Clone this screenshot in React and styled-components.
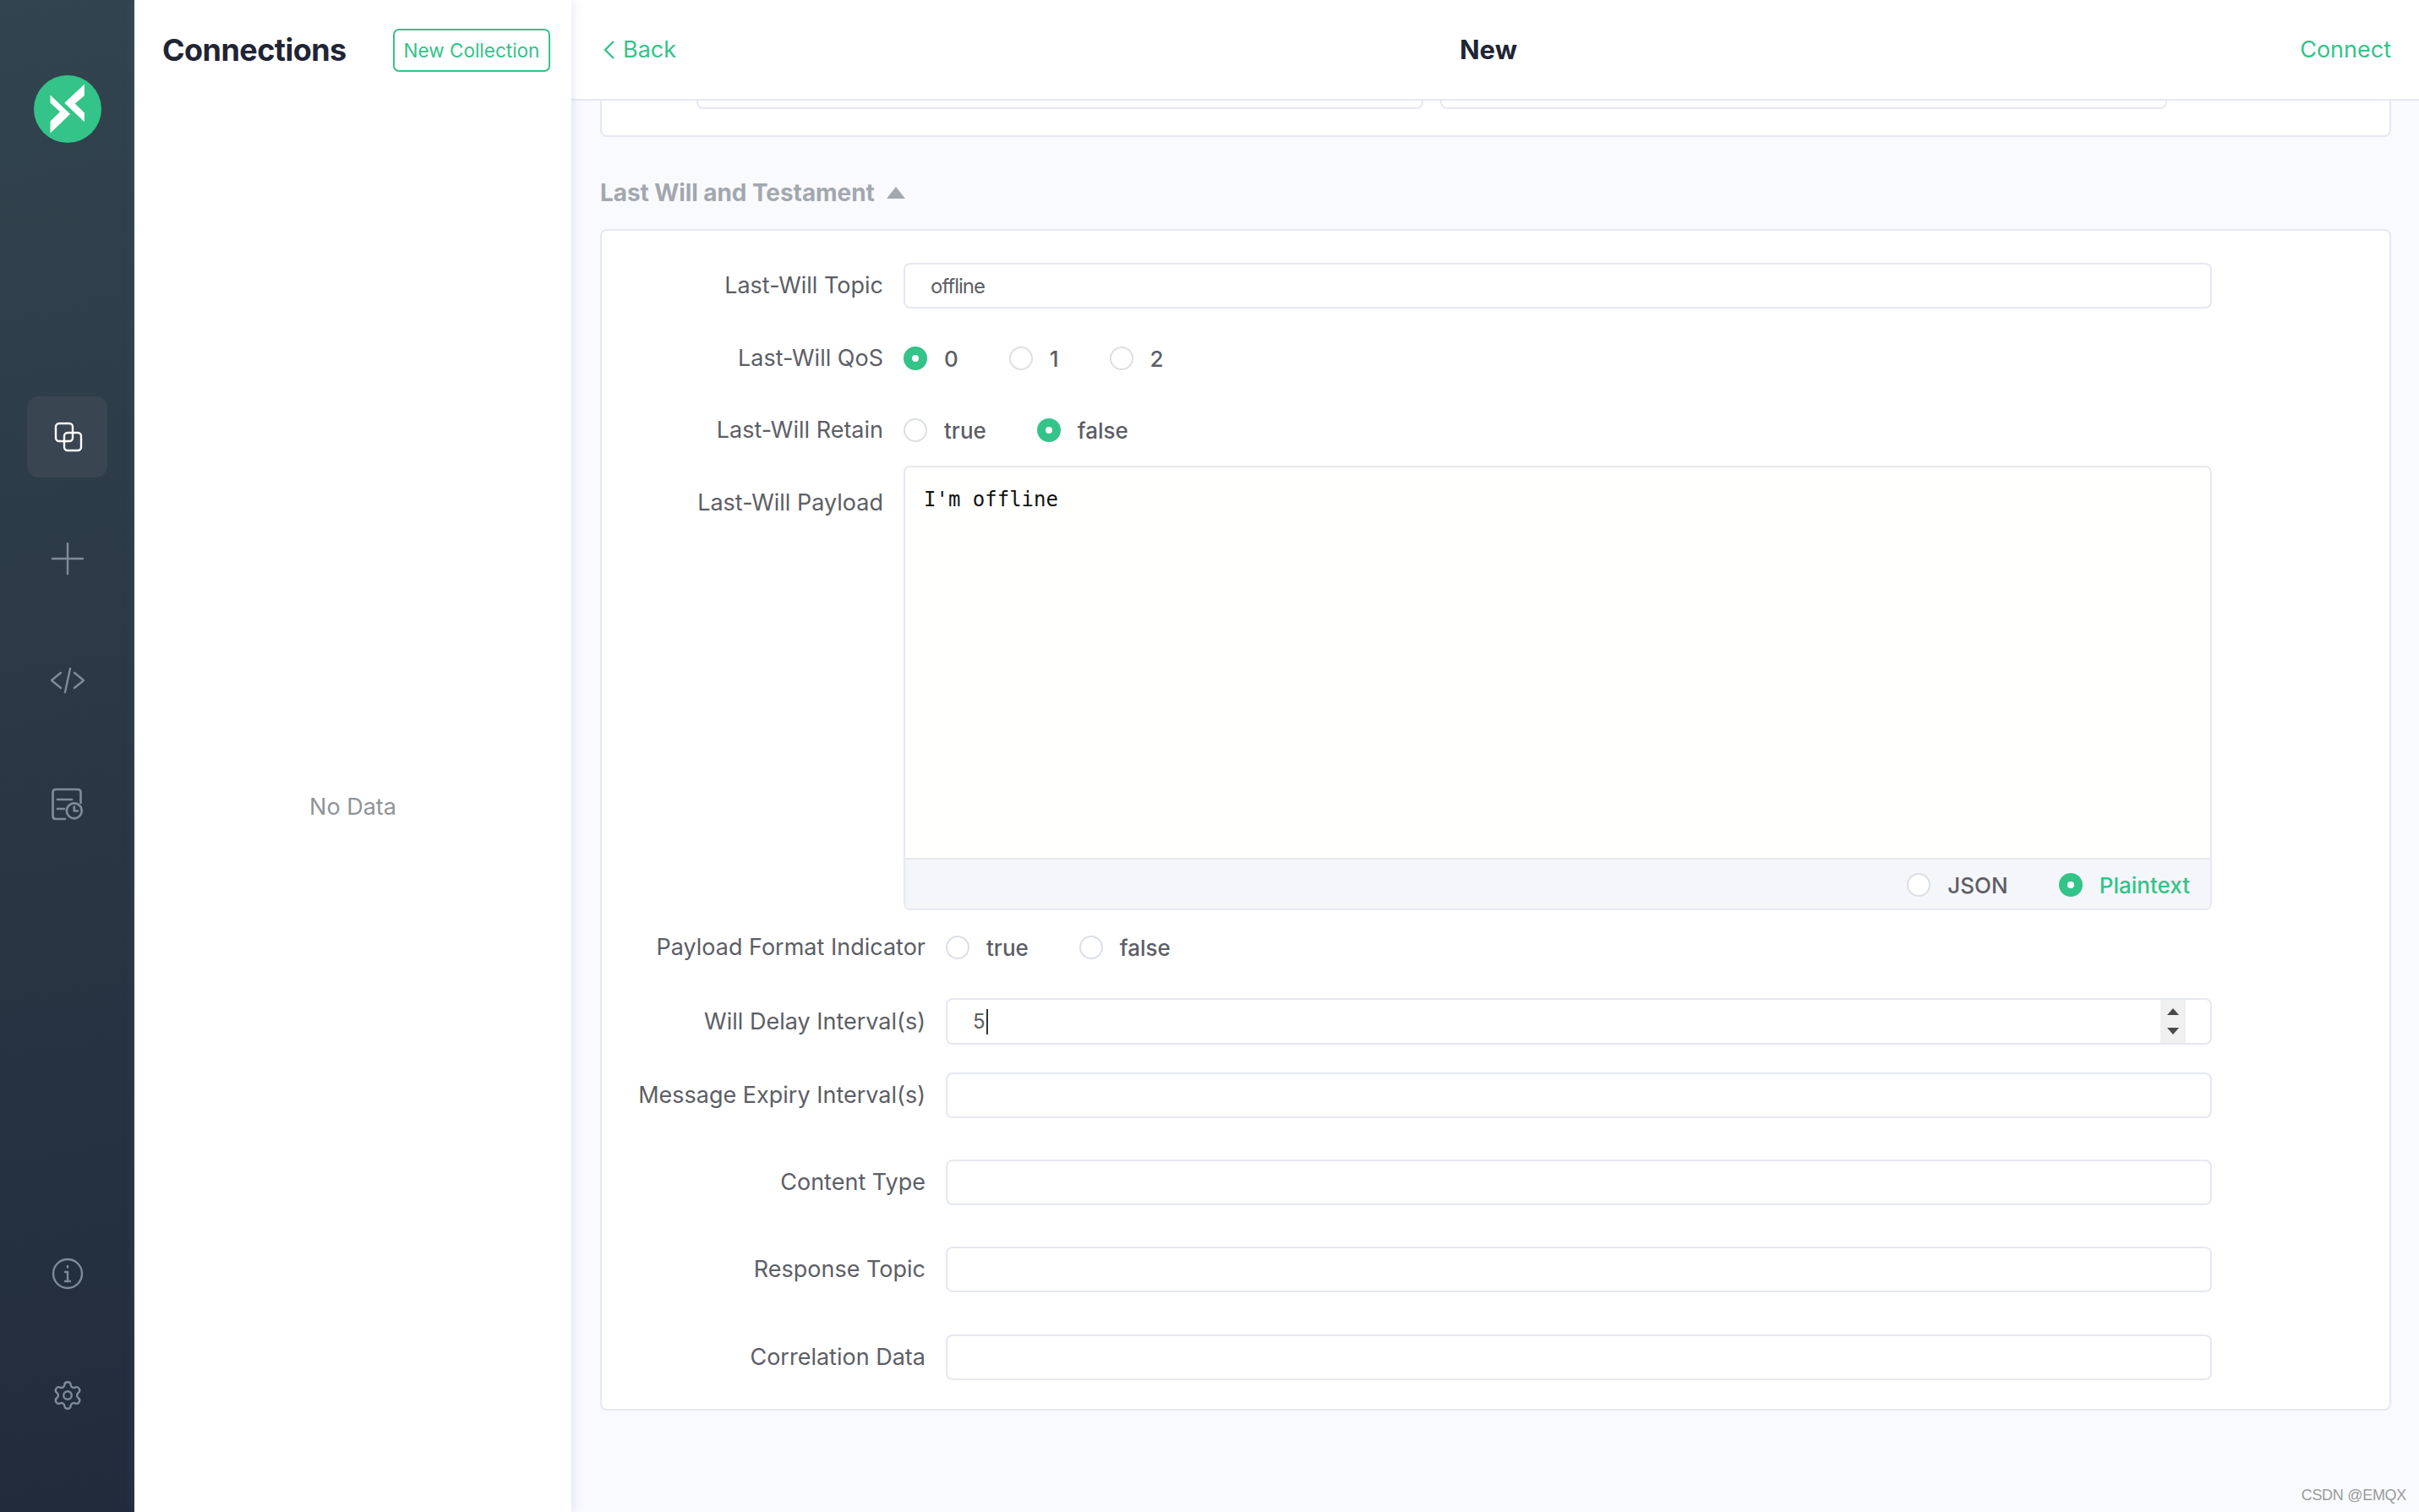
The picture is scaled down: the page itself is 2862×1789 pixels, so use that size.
import React from 'react';
import styled, { createGlobalStyle } from 'styled-components';
import { Settings } from 'lucide-react';

const green = '#34c388';
const line = '#e6e8f1';
const labelColor = '#5c5e66';

const Global = createGlobalStyle`
	html,
	body {
		margin: 0;
		height: 100%;
		overflow: hidden;
		font-family: Inter, "Noto Sans", sans-serif;
	}
	* {
		box-sizing: border-box;
	}
`;
const Page = styled.div`
	display: flex;
	height: 1789px;
	width: 2862px;
	background: #f9fafe;
	position: relative;
	overflow: hidden;
`;
const Sidebar = styled.nav`
	width: 159px;
	flex: none;
	display: flex;
	flex-direction: column;
	align-items: center;
	padding: 89px 0 89px;
	background: linear-gradient(170deg, #32444f 0%, #2b3a46 40%, #222b3c 100%);
`;
const Logo = styled.svg`
	width: 80px;
	height: 80px;
	flex: none;
	margin-bottom: 300px;
`;
const NavItem = styled.div`
	width: 95px;
	height: 96px;
	flex: none;
	display: flex;
	align-items: center;
	justify-content: center;
	border-radius: 14px;
	margin-bottom: ${p => p.$mb || 48}px;
	margin-top: ${p => p.$push ? 'auto' : '0'};
	background: ${p => p.$active ? '#3a4552' : 'transparent'};
	color: ${p => p.$active ? '#ffffff' : '#7e8c98'};
`;
const NavIcon = styled.svg`
	width: 40px;
	height: 40px;
	fill: none;
	stroke: currentColor;
	stroke-width: 2.4;
	stroke-linecap: round;
	stroke-linejoin: round;
`;
const ListPanel = styled.aside`
	width: 517px;
	flex: none;
	display: flex;
	flex-direction: column;
	background: #fff;
	position: relative;
	z-index: 2;
	box-shadow: 1px 0 12px rgba(120, 130, 180, 0.22);
`;
const ListHead = styled.div`
	height: 118px;
	flex: none;
	display: flex;
	align-items: flex-start;
	justify-content: space-between;
	padding: 34px 25px 0 33px;
`;
const ListTitle = styled.h1`
	margin: 0;
	font-size: 36px;
	line-height: 50px;
	font-weight: 700;
	color: #1f2535;
	letter-spacing: -0.55px;
`;
const OutlineButton = styled.div`
	width: 186px;
	height: 51px;
	border: 2px solid ${green};
	border-radius: 7px;
	display: flex;
	align-items: center;
	justify-content: center;
	color: ${green};
	font-size: 22.5px;
	white-space: nowrap;
`;
const Empty = styled.div`
	flex: 1;
	display: flex;
	align-items: center;
	justify-content: center;
	padding-top: 2px;
	color: #909399;
	font-size: 27px;
`;
const Main = styled.main`
	flex: 1;
	min-width: 0;
	display: flex;
	flex-direction: column;
`;
const TopBar = styled.header`
	height: 119px;
	flex: none;
	display: grid;
	grid-template-columns: 1fr auto 1fr;
	align-items: center;
	padding: 0 33px 0 38px;
	background: #fff;
	border-bottom: 2px solid ${line};
`;
const BackLink = styled.div`
	display: flex;
	align-items: center;
	gap: 9px;
	color: ${green};
	font-size: 27px;
`;
const Title = styled.div`
	font-size: 31px;
	font-weight: 700;
	color: #1f2535;
	margin-right: 21px;
`;
const ConnectLink = styled.div`
	justify-self: end;
	color: ${green};
	font-size: 27px;
`;
const Scroller = styled.div`
	flex: 1;
	min-height: 0;
	display: flex;
	flex-direction: column;
	padding: 0 33px 0 34px;
`;
const ClippedCard = styled.section`
	height: 43px;
	flex: none;
	display: flex;
	gap: 20px;
	padding-left: 112px;
	background: #fff;
	border: 2px solid ${line};
	border-top: 0;
	border-radius: 0 0 8px 8px;
`;
const ClippedInput = styled.div`
	width: 860px;
	height: 10px;
	background: #fff;
	border: 2px solid ${line};
	border-top: 0;
	border-radius: 0 0 8px 8px;
`;
const SectionTitle = styled.h2`
	margin: 46px 0 23px;
	height: 40px;
	display: flex;
	align-items: center;
	gap: 14px;
	font-size: 28px;
	font-weight: 700;
	letter-spacing: -0.08px;
	color: #a2a8af;
`;
const Caret = styled.span`
	width: 0;
	height: 0;
	border-left: 11px solid transparent;
	border-right: 11px solid transparent;
	border-bottom: 14px solid #a2a8af;
`;
const Card = styled.section`
	height: 1398px;
	flex: none;
	display: flex;
	flex-direction: column;
	background: #fff;
	border: 2px solid ${line};
	border-radius: 8px;
	padding: 38px 210px 0 0;
`;
const Row = styled.div`
	display: flex;
	align-items: ${p => p.$top ? 'flex-start' : 'center'};
	gap: 24px;
	min-height: 54px;
	flex: none;
	margin-bottom: ${p => p.$mb || 0}px;
`;
const Label = styled.label`
	width: ${p => p.$wide ? 383 : 333}px;
	flex: none;
	text-align: right;
	font-size: 27px;
	color: ${labelColor};
	white-space: nowrap;
	padding-top: ${p => p.$top ? 26 : 0}px;
	line-height: ${p => p.$top ? 36 : 54}px;
`;
const Field = styled.div`
	flex: 1;
	height: ${p => p.$h || 54}px;
	display: flex;
	align-items: center;
	padding-left: ${p => p.$pad || 30}px;
	background: #fff;
	border: 2px solid ${line};
	border-radius: 8px;
	font-size: 24px;
	letter-spacing: -1px;
	color: #5c5e66;
	overflow: hidden;
`;
const TextCaret = styled.span`
	width: 2px;
	height: 30px;
	margin-left: 2px;
	background: #333;
`;
const Spinner = styled.div`
	margin-left: auto;
	margin-right: 29px;
	width: 30px;
	height: 100%;
	flex: none;
	display: flex;
	flex-direction: column;
	align-items: center;
	justify-content: space-between;
	padding: 10px 0;
	background: #f0f0f0;
`;
const Arrow = styled.span`
	width: 0;
	height: 0;
	border-left: 7px solid transparent;
	border-right: 7px solid transparent;
	${p => p.$down ? 'border-top: 8px solid #4a4a4a;' : 'border-bottom: 8px solid #4a4a4a;'}
`;
const Options = styled.div`
	display: flex;
	align-items: center;
	gap: ${p => p.$gap || 60}px;
`;
const Option = styled.div`
	display: flex;
	align-items: center;
	gap: 20px;
	font-size: 26px;
	font-weight: 500;
	color: ${p => p.$on && p.$tint ? green : labelColor};
`;
const Dot = styled.span`
	width: 28px;
	height: 28px;
	flex: none;
	border-radius: 50%;
	background: ${p => p.$on ? green : '#fff'};
	border: 2px solid ${p => p.$on ? green : '#dcdfe6'};
	display: flex;
	align-items: center;
	justify-content: center;
	&::after {
		content: '';
		width: 8px;
		height: 8px;
		border-radius: 50%;
		background: ${p => p.$on ? '#fff' : 'transparent'};
	}
`;
const Editor = styled.div`
	flex: 1;
	height: 526px;
	display: flex;
	flex-direction: column;
	border: 2px solid ${line};
	border-radius: 8px;
	overflow: hidden;
`;
const Code = styled.pre`
	flex: 1;
	margin: 0;
	padding: 22px 22px;
	background: #fffffd;
	font-family: "DejaVu Sans Mono", "Liberation Mono", monospace;
	font-size: 24px;
	line-height: 32px;
	color: #111;
`;
const EditorFoot = styled.div`
	height: 60px;
	flex: none;
	display: flex;
	align-items: center;
	justify-content: flex-end;
	padding: 2px 24px 0 0;
	background: #f5f6fa;
	border-top: 2px solid ${line};
`;
const Watermark = styled.div`
	position: absolute;
	right: 15px;
	bottom: 9px;
	font-family: "Liberation Sans", Arial, sans-serif;
	font-size: 18px;
	letter-spacing: -0.3px;
	color: #9b9b9b;
`;

const Radio = ({ on, tint, children }) => (
	<Option $on={on} $tint={tint}>
		<Dot $on={on} />
		{children}
	</Option>
);

const App = () => (
	<Page>
		<Global />
		<Sidebar>
			<Logo viewBox="0 0 100 100">
				<circle cx="50" cy="50" r="50" fill="#34c388" />
				<path fill="#fff" d="M24.4 29.4 L53.8 57.6 L24.4 85.7 L24.4 68 L38.7 54.2 L24.4 40.8 Z" />
				<path fill="#fff" d="M74.8 13.4 L74.8 30.3 L60.9 42 L74.8 55.5 L74.8 69 L45.4 40.8 Z" />
			</Logo>
			<NavItem $active>
				<NavIcon viewBox="0 0 40 40">
					<rect x="6" y="4" width="20" height="21" rx="4" />
					<rect x="16" y="15" width="20" height="21" rx="4" />
				</NavIcon>
			</NavItem>
			<NavItem>
				<NavIcon viewBox="0 0 40 40">
					<path d="M2 20 H38 M20 2 V38" />
				</NavIcon>
			</NavItem>
			<NavItem $mb={51}>
				<NavIcon viewBox="0 0 40 40" style={{ width: 44 }}>
					<path d="M12 11 L1 20 L12 29 M28 11 L39 20 L28 29 M23 6 L17 34" />
				</NavIcon>
			</NavItem>
			<NavItem>
				<NavIcon viewBox="0 0 40 40" style={{ strokeWidth: 2.7 }}>
					<path d="M17 37 H6 Q2.5 37 2.5 33.5 V5.5 Q2.5 2 6 2 H32 Q35.5 2 35.5 5.5 V18" />
					<path d="M8 14 H25 M8 25 H16" />
					<circle cx="27.8" cy="27.3" r="9" />
					<path d="M27.8 22.5 V27.5 H32" />
				</NavIcon>
			</NavItem>
			<NavItem $push>
				<NavIcon viewBox="0 0 40 40">
					<circle cx="20" cy="20" r="17" />
					<path d="M20 18 V29 M17 18 H20 M17 29 H23 M20 11 V12.5" />
				</NavIcon>
			</NavItem>
			<NavItem $mb={1}>
				<Settings size={38} strokeWidth={1.5} />
			</NavItem>
		</Sidebar>
		<ListPanel>
			<ListHead>
				<ListTitle>Connections</ListTitle>
				<OutlineButton>New Collection</OutlineButton>
			</ListHead>
			<Empty>No Data</Empty>
		</ListPanel>
		<Main>
			<TopBar>
				<BackLink>
					<svg width="14" height="24" viewBox="0 0 14 24" fill="none" stroke={green} strokeWidth="2.4">
						<path d="M12 2 L2 12 L12 22" />
					</svg>
					Back
				</BackLink>
				<Title>New</Title>
				<ConnectLink>Connect</ConnectLink>
			</TopBar>
			<Scroller>
				<ClippedCard>
					<ClippedInput />
					<ClippedInput />
				</ClippedCard>
				<SectionTitle>
					Last Will and Testament
					<Caret />
				</SectionTitle>
				<Card>
					<Row $mb={32}>
						<Label>Last-Will Topic</Label>
						<Field>offline</Field>
					</Row>
					<Row $mb={31}>
						<Label>Last-Will QoS</Label>
						<Options>
							<Radio on>0</Radio>
							<Radio>1</Radio>
							<Radio>2</Radio>
						</Options>
					</Row>
					<Row $mb={15}>
						<Label>Last-Will Retain</Label>
						<Options>
							<Radio>true</Radio>
							<Radio on>false</Radio>
						</Options>
					</Row>
					<Row $top $mb={17}>
						<Label $top>Last-Will Payload</Label>
						<Editor>
							<Code>I'm offline</Code>
							<EditorFoot>
								<Options>
									<Radio>JSON</Radio>
									<Radio on tint>Plaintext</Radio>
								</Options>
							</EditorFoot>
						</Editor>
					</Row>
					<Row $mb={33}>
						<Label $wide>Payload Format Indicator</Label>
						<Options>
							<Radio>true</Radio>
							<Radio>false</Radio>
						</Options>
					</Row>
					<Row $mb={33}>
						<Label $wide>Will Delay Interval(s)</Label>
						<Field $h={55}>
							5<TextCaret />
							<Spinner>
								<Arrow />
								<Arrow $down />
							</Spinner>
						</Field>
					</Row>
					<Row $mb={49}>
						<Label $wide>Message Expiry Interval(s)</Label>
						<Field />
					</Row>
					<Row $mb={49}>
						<Label $wide>Content Type</Label>
						<Field />
					</Row>
					<Row $mb={50}>
						<Label $wide>Response Topic</Label>
						<Field />
					</Row>
					<Row>
						<Label $wide>Correlation Data</Label>
						<Field />
					</Row>
				</Card>
			</Scroller>
		</Main>
		<Watermark>CSDN @EMQX</Watermark>
	</Page>
);
export default App;
